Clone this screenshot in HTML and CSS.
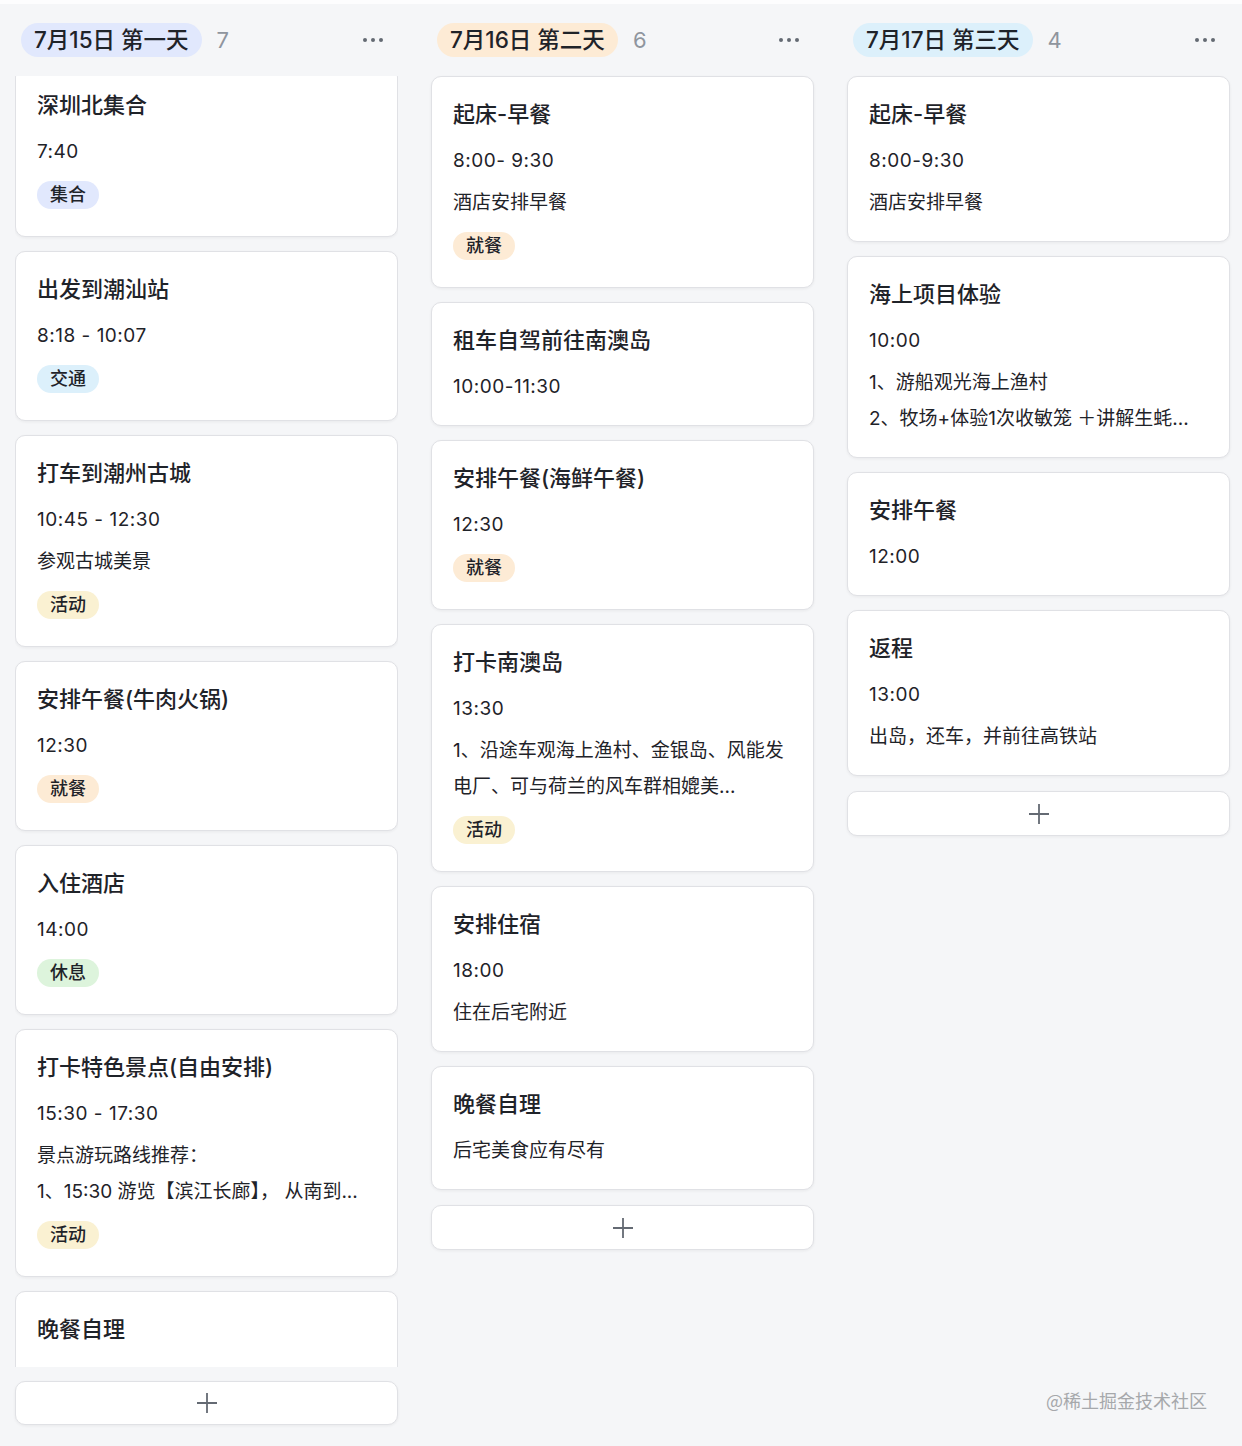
FILE: index.html
```html
<!DOCTYPE html>
<html lang="zh-CN">
<head>
<meta charset="utf-8">
<title>行程看板</title>
<link rel="stylesheet" href="styles.css">
</head>
<body>
<div class="page">
  <div class="board">
    <section class="column">
      <header class="col-head">
        <span class="day-pill pill-blue">7月15日 第一天</span>
        <span class="count">7</span>
        <span class="more"><svg width="22" height="6" viewBox="0 0 22 6"><circle cx="3" cy="3" r="2"/><circle cx="11" cy="3" r="2"/><circle cx="19" cy="3" r="2"/></svg></span>
      </header>
      <div class="col-body clipped">
        <div class="card-list scrolled">
          <div class="card">
            <div class="title">深圳北集合</div>
            <div class="body">
              <div class="line">7:40</div>
              <div class="tag-row"><span class="tag t-gather">集合</span></div>
            </div>
          </div>
          <div class="card">
            <div class="title">出发到潮汕站</div>
            <div class="body">
              <div class="line">8:18 - 10:07</div>
              <div class="tag-row"><span class="tag t-traffic">交通</span></div>
            </div>
          </div>
          <div class="card">
            <div class="title">打车到潮州古城</div>
            <div class="body">
              <div class="line">10:45 - 12:30</div>
              <div class="desc"><div>参观古城美景</div></div>
              <div class="tag-row"><span class="tag t-activity">活动</span></div>
            </div>
          </div>
          <div class="card">
            <div class="title">安排午餐(牛肉火锅)</div>
            <div class="body">
              <div class="line">12:30</div>
              <div class="tag-row"><span class="tag t-meal">就餐</span></div>
            </div>
          </div>
          <div class="card">
            <div class="title">入住酒店</div>
            <div class="body">
              <div class="line">14:00</div>
              <div class="tag-row"><span class="tag t-rest">休息</span></div>
            </div>
          </div>
          <div class="card">
            <div class="title">打卡特色景点(自由安排)</div>
            <div class="body">
              <div class="line">15:30 - 17:30</div>
              <div class="desc"><div>景点游玩路线推荐：</div><div>1、15:30 游览【滨江长廊】， 从南到...</div></div>
              <div class="tag-row"><span class="tag t-activity">活动</span></div>
            </div>
          </div>
          <div class="card card-tall">
            <div class="title">晚餐自理</div>
          </div>
        </div>
      </div>
      <button class="add-btn first-add" type="button"><svg width="22" height="22" viewBox="0 0 22 22"><path d="M11 1V21M1 11H21"/></svg></button>
    </section>

    <section class="column">
      <header class="col-head">
        <span class="day-pill pill-orange">7月16日 第二天</span>
        <span class="count">6</span>
        <span class="more"><svg width="22" height="6" viewBox="0 0 22 6"><circle cx="3" cy="3" r="2"/><circle cx="11" cy="3" r="2"/><circle cx="19" cy="3" r="2"/></svg></span>
      </header>
      <div class="col-body">
        <div class="card-list">
          <div class="card">
            <div class="title">起床-早餐</div>
            <div class="body">
              <div class="line">8:00- 9:30</div>
              <div class="desc"><div>酒店安排早餐</div></div>
              <div class="tag-row"><span class="tag t-meal">就餐</span></div>
            </div>
          </div>
          <div class="card">
            <div class="title">租车自驾前往南澳岛</div>
            <div class="body">
              <div class="line">10:00-11:30</div>
            </div>
          </div>
          <div class="card">
            <div class="title">安排午餐(海鲜午餐)</div>
            <div class="body">
              <div class="line">12:30</div>
              <div class="tag-row"><span class="tag t-meal">就餐</span></div>
            </div>
          </div>
          <div class="card">
            <div class="title">打卡南澳岛</div>
            <div class="body">
              <div class="line">13:30</div>
              <div class="desc"><div>1、沿途车观海上渔村、金银岛、风能发</div><div>电厂、可与荷兰的风车群相媲美...</div></div>
              <div class="tag-row"><span class="tag t-activity">活动</span></div>
            </div>
          </div>
          <div class="card">
            <div class="title">安排住宿</div>
            <div class="body">
              <div class="line">18:00</div>
              <div class="desc"><div>住在后宅附近</div></div>
            </div>
          </div>
          <div class="card">
            <div class="title">晚餐自理</div>
            <div class="body">
              <div class="desc"><div>后宅美食应有尽有</div></div>
            </div>
          </div>
        </div>
      </div>
      <button class="add-btn" type="button"><svg width="22" height="22" viewBox="0 0 22 22"><path d="M11 1V21M1 11H21"/></svg></button>
    </section>

    <section class="column">
      <header class="col-head">
        <span class="day-pill pill-cyan">7月17日 第三天</span>
        <span class="count">4</span>
        <span class="more"><svg width="22" height="6" viewBox="0 0 22 6"><circle cx="3" cy="3" r="2"/><circle cx="11" cy="3" r="2"/><circle cx="19" cy="3" r="2"/></svg></span>
      </header>
      <div class="col-body">
        <div class="card-list">
          <div class="card">
            <div class="title">起床-早餐</div>
            <div class="body">
              <div class="line">8:00-9:30</div>
              <div class="desc"><div>酒店安排早餐</div></div>
            </div>
          </div>
          <div class="card">
            <div class="title">海上项目体验</div>
            <div class="body">
              <div class="line">10:00</div>
              <div class="desc"><div>1、游船观光海上渔村</div><div>2、牧场+体验1次收敏笼 ＋讲解生蚝...</div></div>
            </div>
          </div>
          <div class="card">
            <div class="title">安排午餐</div>
            <div class="body">
              <div class="line">12:00</div>
            </div>
          </div>
          <div class="card">
            <div class="title">返程</div>
            <div class="body">
              <div class="line">13:00</div>
              <div class="desc"><div>出岛，还车，并前往高铁站</div></div>
            </div>
          </div>
        </div>
      </div>
      <button class="add-btn" type="button"><svg width="22" height="22" viewBox="0 0 22 22"><path d="M11 1V21M1 11H21"/></svg></button>
    </section>
  </div>
  <div class="watermark">@稀土掘金技术社区</div>
</div>
</body>
</html>
```

FILE: styles.css
```css
* {
  box-sizing: border-box;
}

html, body {
  margin: 0;
  padding: 0;
}

body {
  background: #f5f6f8;
  font-family: "Inter", "Noto Sans CJK SC", "Noto Sans", sans-serif;
  color: #1f2329;
}

.page {
  position: relative;
  width: 1242px;
  height: 1446px;
  overflow: hidden;
  border-top: 4px solid #fdfdfe;
}

.board {
  display: flex;
  gap: 33px;
  padding: 19px 0 0 15px;
}

.column {
  width: 383px;
  display: flex;
  flex-direction: column;
}

.col-head {
  height: 34px;
  margin-bottom: 19px;
  padding: 0 14px 0 6px;
  display: flex;
  align-items: center;
}

.day-pill {
  height: 34px;
  line-height: 34px;
  padding: 0 13px;
  border-radius: 17px;
  font-size: 22.5px;
  font-weight: 500;
  color: #1f2329;
  white-space: nowrap;
}

.pill-blue { background: #e1e8fd; }
.pill-orange { background: #fdebd5; }
.pill-cyan { background: #dcf0fb; }

.count {
  margin-left: 15px;
  font-size: 22px;
  color: #8f959e;
}

.more {
  margin-left: auto;
  display: flex;
  align-items: center;
}

.more svg {
  fill: #646a73;
}

.col-body.clipped {
  height: 1291px;
  overflow: hidden;
}

.card-list {
  display: flex;
  flex-direction: column;
  gap: 14px;
}

.card-list.scrolled {
  margin-top: -9px;
}

.card {
  background: #fff;
  border: 1px solid #e0e1e5;
  border-radius: 10px;
  box-shadow: 0 1px 3px rgba(31, 35, 41, 0.06);
  padding: 23px 21px 20px;
}

.card-tall {
  min-height: 124px;
}

.title {
  font-size: 22px;
  line-height: 28px;
  font-weight: 500;
  margin-bottom: 15px;
  white-space: nowrap;
  overflow: hidden;
  text-overflow: ellipsis;
}

.body {
  display: flex;
  flex-direction: column;
  gap: 6px;
}

.line {
  font-size: 19px;
  line-height: 36px;
  letter-spacing: 0.5px;
  color: #1f2329;
}

.desc {
  font-size: 19px;
  line-height: 36px;
  color: #1f2329;
}

.desc > div {
  white-space: nowrap;
  overflow: hidden;
  text-overflow: ellipsis;
}

.tag-row {
  height: 40px;
  display: flex;
  align-items: flex-start;
}

.tag {
  margin-top: 5px;
  height: 28px;
  line-height: 28px;
  padding: 0 13px;
  border-radius: 14px;
  font-size: 18px;
  font-weight: 500;
  color: #1f2329;
}

.t-gather { background: #e1e8fd; }
.t-traffic { background: #dcf0fb; }
.t-activity { background: #faf1d2; }
.t-meal { background: #fdebd5; }
.t-rest { background: #ddf4dc; }

.add-btn {
  margin-top: 15px;
  height: 45px;
  width: 100%;
  background: #fff;
  border: 1px solid #e0e1e5;
  border-radius: 10px;
  box-shadow: 0 1px 3px rgba(31, 35, 41, 0.06);
  display: flex;
  align-items: center;
  justify-content: center;
  padding: 0;
  cursor: pointer;
}

.add-btn.first-add {
  margin-top: 14px;
  height: 44px;
}

.add-btn svg path {
  stroke: #646a73;
  stroke-width: 1.8;
  fill: none;
}

.watermark {
  position: absolute;
  right: 35px;
  top: 1383px;
  font-size: 18px;
  line-height: 26px;
  color: #a6a8ab;
  font-family: "Noto Sans CJK SC", sans-serif;
}
```
